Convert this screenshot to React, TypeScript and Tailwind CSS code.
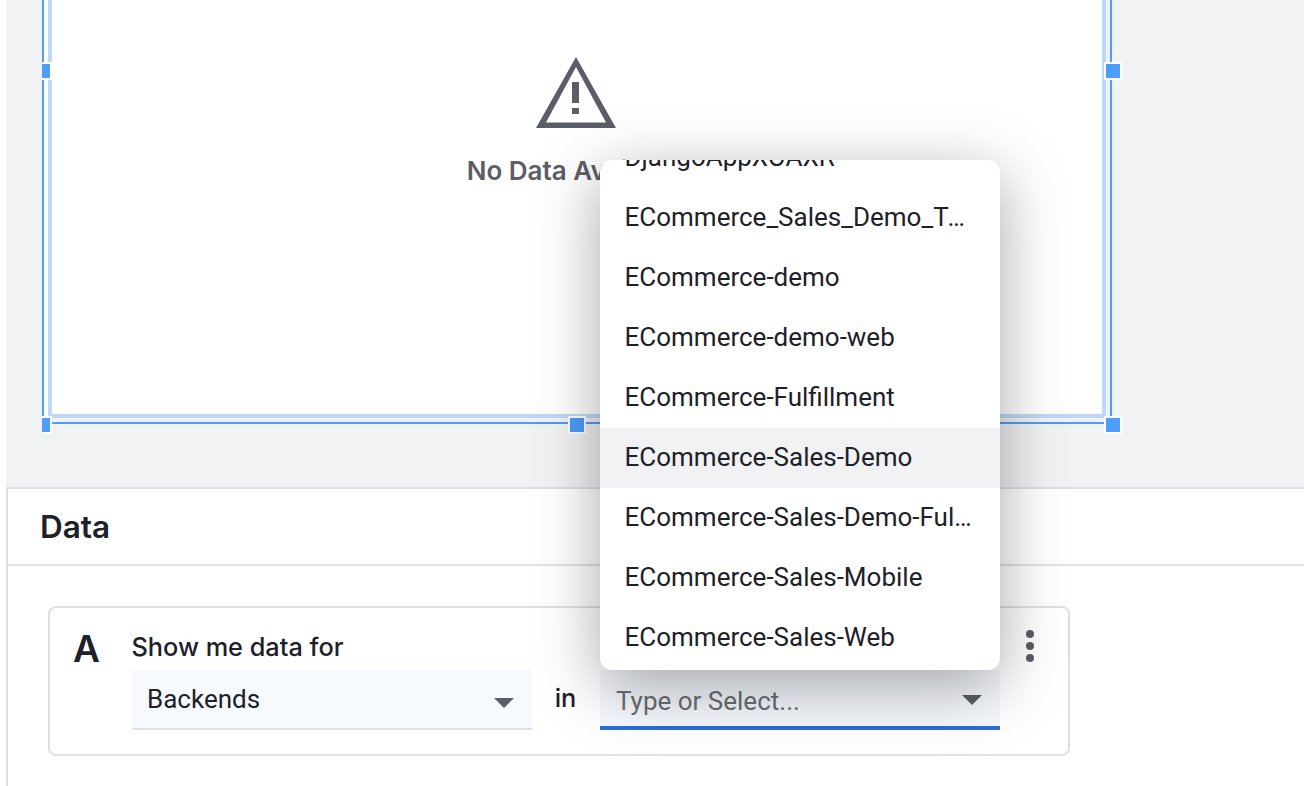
const items = [
  "DjangoAppXOAXR",
  "ECommerce_Sales_Demo_Test_Application",
  "ECommerce-demo",
  "ECommerce-demo-web",
  "ECommerce-Fulfillment",
  "ECommerce-Sales-Demo",
  "ECommerce-Sales-Demo-Fulfillment",
  "ECommerce-Sales-Mobile",
  "ECommerce-Sales-Web",
];

function Caret({ className }: { className: string }) {
  return (
    <svg width="20" height="10" viewBox="0 0 20 10" className={className}>
      <path d="M0 0H20L10 10Z" fill="#5b5e66" />
    </svg>
  );
}

function Handle({ className }: { className: string }) {
  return <div className={`absolute h-[18px] bg-[#4d9dfc] border-2 border-white ${className}`} />;
}

export default function App() {
  return (
    <div className="relative w-[1304px] h-[786px] overflow-hidden bg-white pl-[6px] font-['Inter',sans-serif] text-[#1d2129]">
      <div className="h-[487px] bg-[#f1f2f4] pl-[36px] pb-[63px] flex items-end overflow-hidden">
        <div className="relative w-[1070px] h-[500px] shrink-0 border-2 border-t-0 border-[#4d9dfc] pr-1 pb-1">
          <div className="h-full bg-white pl-1">
            <div className="h-full border-4 border-t-0 border-[#bfd8f6] bg-white flex flex-col items-center pt-[133px]">
              <svg width="80" height="72" viewBox="0 0 80 72" className="mr-[2px] mb-[26px]">
                <path d="M40 0L80 71H0Z M40 10L10 65.5H70Z" fillRule="evenodd" fill="#5b5e66" />
                <rect x="36" y="25" width="7" height="21" fill="#5b5e66" />
                <rect x="36" y="51" width="7" height="6" fill="#5b5e66" />
              </svg>
              <div className="text-[26px] leading-[32px] font-semibold text-[#5b5e66] whitespace-nowrap">No Data Available</div>
            </div>
          </div>
          <Handle className="left-[-2px] top-[138px] border-l-0 w-[10px]" />
          <Handle className="right-[-12px] top-[138px] w-[18px]" />
          <Handle className="left-[-2px] bottom-[-12px] border-l-0 w-[10px]" />
          <Handle className="left-[524px] bottom-[-12px] w-[18px]" />
          <Handle className="right-[-12px] bottom-[-12px] w-[18px]" />
        </div>
      </div>
      <div className="h-[299px] border-l-2 border-t-2 border-[#e0e0e0]">
        <div className="h-[77px] border-b-2 border-[#e0e0e0] pl-[32px] flex items-center text-[31.5px] font-semibold">Data</div>
        <div className="pl-[40px] pt-[40px]">
          <div className="relative w-[1022px] h-[150px] border-2 border-[#e0e0e0] rounded-[8px] pl-[81.5px] pt-[22px]">
            <div className="absolute left-[23px] top-[21px] text-[37px] leading-[40px] font-semibold">A</div>
            <div className="text-[25.3px] leading-[34px] font-medium h-[40px]">Show me data for</div>
            <div className="flex items-start">
              <div className="w-[400px] h-[60px] bg-[#f6f9fe] border-b-2 border-[#e0e0e0] flex items-center justify-between pl-[15.5px] pr-[18px] font-['Roboto',sans-serif] text-[26px]">
                <span>Backends</span>
                <Caret className="mt-[8px]" />
              </div>
              <div className="w-[68px] text-center text-[25.3px] font-medium leading-[55px]">in</div>
              <div className="w-[400px] h-[60px] bg-[#f6f9fe] border-b-4 border-[#2a6ce0] flex items-center justify-between pl-[16.5px] pr-[18px] pt-[2px] font-['Roboto',sans-serif] text-[26px] text-[#6b6e73]">
                <span className="mt-[4px]">Type or Select...</span>
                <Caret className="mt-[2px]" />
              </div>
            </div>
            <div className="absolute left-[976px] top-[22px] flex flex-col gap-[4px]">
              <div className="w-[8px] h-[8px] rounded-full bg-[#5b5e66]" />
              <div className="w-[8px] h-[8px] rounded-full bg-[#5b5e66]" />
              <div className="w-[8px] h-[8px] rounded-full bg-[#5b5e66]" />
            </div>
          </div>
        </div>
      </div>
      <div className="absolute left-[600px] top-[160px] w-[400px] h-[510px] bg-white rounded-[12px] overflow-hidden shadow-[0_16px_64px_rgba(0,0,0,0.35)] font-['Roboto',sans-serif] text-[26px]">
        <div className="mt-[-32px]">
          {items.map((t) => (
            <div
              key={t}
              className={`h-[60px] pl-[24.5px] pr-[26px] leading-[58px] truncate ${t === "ECommerce-Sales-Demo" ? "bg-[#f1f2f4]" : ""}`}
            >
              {t}
            </div>
          ))}
        </div>
      </div>
    </div>
  );
}
